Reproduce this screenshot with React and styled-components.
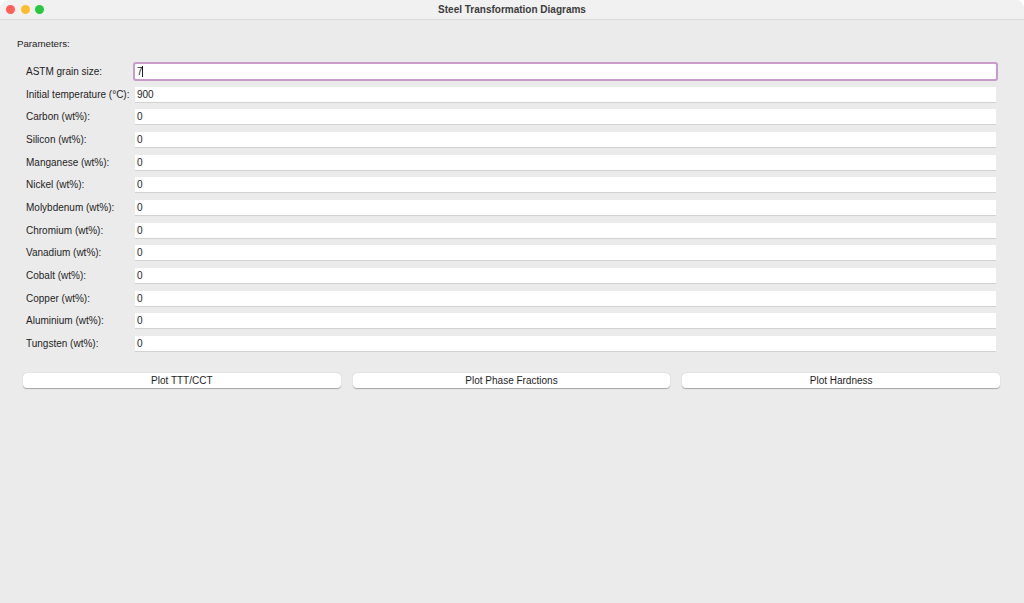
import { Fragment } from "react";
import { createGlobalStyle, styled } from "styled-components";

const Global = createGlobalStyle`
  html, body {
    margin: 0;
    padding: 0;
    background: #ffffff;
  }
  body {
    font-family: "Liberation Sans", Arial, sans-serif;
  }
  * { box-sizing: border-box; }
`;

const Window = styled.div`
  width: 1024px;
  height: 603px;
  display: flex;
  flex-direction: column;
  background: #ebebeb;
  border-radius: 9px 9px 0 0;
  overflow: hidden;
`;

const TitleBar = styled.div`
  height: 20px;
  flex: none;
  display: grid;
  grid-template-columns: 1fr auto 1fr;
  align-items: center;
  background: #f1f1f1;
  border-bottom: 1px solid #dadada;
`;

const Lights = styled.div`
  display: flex;
  gap: 5.5px;
  padding-left: 6px;
  padding-bottom: 1px;
`;

const Light = styled.span`
  width: 9px;
  height: 9px;
  border-radius: 50%;
  background: ${(p) => p.$color};
`;

const Title = styled.div`
  font-size: 10px;
  font-weight: bold;
  color: #3b3b3b;
  padding-bottom: 1px;
`;

const Body = styled.div`
  flex: 1;
  display: flex;
  flex-direction: column;
`;

const Heading = styled.div`
  font-size: 9.7px;
  color: #1e1e1e;
  margin: 18px 0 0 17px;
  line-height: 12px;
`;

const Form = styled.div`
  display: grid;
  grid-template-columns: 109px 1fr;
  grid-auto-rows: 15px;
  row-gap: 7.67px;
  margin: 14px 28px 0 26px;
  align-items: center;
`;

const Label = styled.div`
  font-size: 10px;
  color: #1e1e1e;
  white-space: nowrap;
`;

const Field = styled.div`
  position: relative;
  height: 15px;
  display: flex;
`;

const Input = styled.input`
  width: 100%;
  height: 15px;
  border: none;
  outline: none;
  background: #ffffff;
  padding: 0 2px;
  font-family: "Liberation Sans", Arial, sans-serif;
  font-size: 10px;
  color: #1e1e1e;
  box-shadow: ${(p) => (p.$focused ? "0 0 0 2px #c89ccb" : "0 1px 0 #d2d2d2")};
  border-radius: ${(p) => (p.$focused ? "1px" : "0")};
`;

const Caret = styled.span`
  position: absolute;
  left: 7px;
  top: 2px;
  width: 1px;
  height: 11px;
  background: #1e1e1e;
`;

const Buttons = styled.div`
  display: grid;
  grid-template-columns: repeat(3, 1fr);
  column-gap: 12px;
  margin: 22px 24px 0 23px;
`;

const Button = styled.button`
  height: 15px;
  border: none;
  border-radius: 4px;
  background: #ffffff;
  box-shadow: 0 0.5px 1px rgba(0, 0, 0, 0.3);
  font-family: "Liberation Sans", Arial, sans-serif;
  font-size: 10px;
  color: #1e1e1e;
  padding: 0;
  line-height: 15px;
`;

const params = [
  ["ASTM grain size:", "7"],
  ["Initial temperature (°C):", "900"],
  ["Carbon (wt%):", "0"],
  ["Silicon (wt%):", "0"],
  ["Manganese (wt%):", "0"],
  ["Nickel (wt%):", "0"],
  ["Molybdenum (wt%):", "0"],
  ["Chromium (wt%):", "0"],
  ["Vanadium (wt%):", "0"],
  ["Cobalt (wt%):", "0"],
  ["Copper (wt%):", "0"],
  ["Aluminium (wt%):", "0"],
  ["Tungsten (wt%):", "0"],
];

export default function App() {
  return (
    <>
      <Global />
      <Window>
        <TitleBar>
          <Lights>
            <Light $color="#fe5f57" />
            <Light $color="#febc2e" />
            <Light $color="#28c840" />
          </Lights>
          <Title>Steel Transformation Diagrams</Title>
          <div />
        </TitleBar>
        <Body>
          <Heading>Parameters:</Heading>
          <Form>
            {params.map(([label, value], i) => (
              <Fragment key={label}>
                <Label>{label}</Label>
                <Field>
                  <Input readOnly defaultValue={value} $focused={i === 0} />
                  {i === 0 && <Caret />}
                </Field>
              </Fragment>
            ))}
          </Form>
          <Buttons>
            <Button>Plot TTT/CCT</Button>
            <Button>Plot Phase Fractions</Button>
            <Button>Plot Hardness</Button>
          </Buttons>
        </Body>
      </Window>
    </>
  );
}
